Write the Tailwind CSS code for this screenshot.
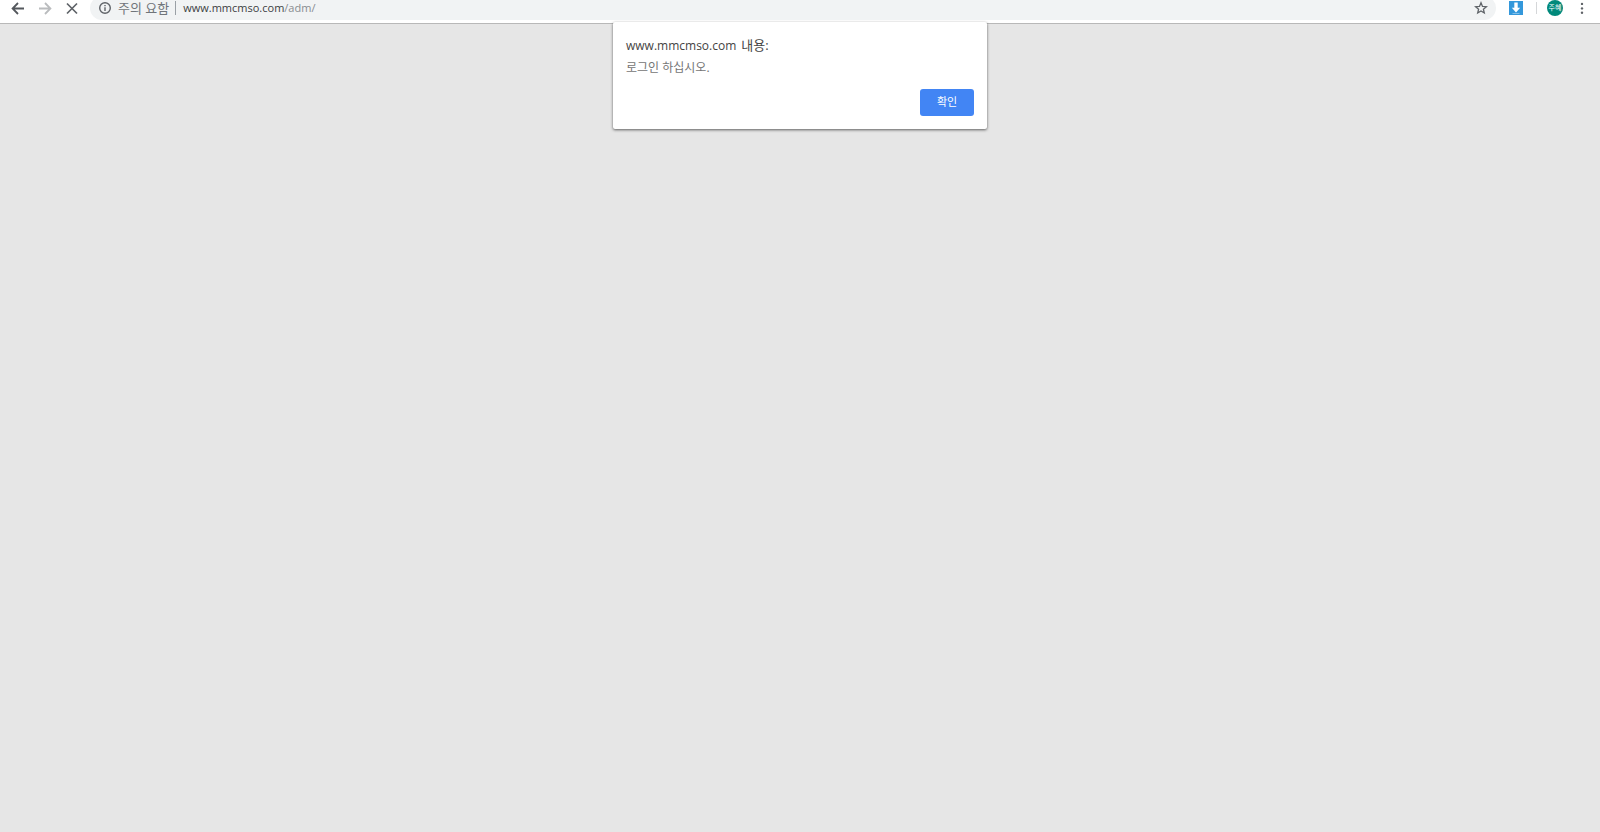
<!doctype html>
<html lang="ko">
<head>
  <meta charset="UTF-8">
  <meta name="viewport" content="width=device-width, initial-scale=1.0">
  <title>www.mmcmso.com</title>
  <script src="https://cdn.jsdelivr.net/npm/@tailwindcss/browser@4"></script>
</head>
<body class="flex h-screen flex-col overflow-hidden bg-[#e6e6e6] font-['Open_Sans','Noto_Sans_CJK_KR',sans-serif]">
  <!-- Toolbar -->
  <header class="h-6 shrink-0 overflow-hidden border-b border-[#b8b8b8] bg-white">
    <div class="-mt-1 flex h-6 items-center text-[#5f6368]">
      <nav class="flex w-[90px] shrink-0 items-center gap-[11px] pl-[10px]">
        <button type="button" aria-label="뒤로">
          <svg class="size-4" viewBox="0 0 16 16" fill="none" stroke="#54585d" stroke-width="1.8"><path d="M14 8.5H3M8 3 2.6 8.5 8 14"/></svg>
        </button>
        <button type="button" aria-label="앞으로">
          <svg class="size-4" viewBox="0 0 16 16" fill="none" stroke="#babcbe" stroke-width="1.8"><path d="M2 8.5h11M8 3l5.4 5.5L8 14"/></svg>
        </button>
        <button type="button" aria-label="중지">
          <svg class="size-4" viewBox="0 0 16 16" fill="none" stroke="#5f6368" stroke-width="1.7"><path d="m3 3.5 10 10M13 3.5l-10 10"/></svg>
        </button>
      </nav>
      <div class="flex h-6 flex-1 items-center rounded-full bg-[#f1f3f4] pr-2 pl-2">
        <svg class="size-[14px]" viewBox="0 0 14 14" fill="none" stroke="#5f6368" stroke-width="1.4"><circle cx="7" cy="7" r="5.3"/><path d="M7 6.3v3.8M7 3.9v1.4"/></svg>
        <span class="ml-[6px] text-[13px] leading-4 text-[#70757a]">주의 요함</span>
        <span class="mr-[7px] ml-[6px] h-[14px] w-px bg-[#9aa0a6]"></span>
        <p class="flex-1 text-[11px] leading-4 text-[#888c90]"><span class="text-[#3c4043]">www.mmcmso.com</span>/adm/</p>
        <button type="button" aria-label="북마크">
          <svg class="size-[14px]" viewBox="0 0 14 14" fill="none" stroke="#5f6368" stroke-width="1.3"><path d="m7 1.8 1.5 3.6 3.9.3-3 2.5.9 3.8L7 10l-3.3 2 .9-3.8-3-2.5 3.9-.3z"/></svg>
        </button>
      </div>
      <div class="flex shrink-0 items-center pr-3 pl-[13px]">
        <button type="button" aria-label="다운로드">
          <svg class="size-[14px]" viewBox="0 0 14 14"><path fill="#3498db" d="M0 0h14v14H0z"/><path fill="#fff" d="M5.3 1.5h3.4v5.2h2.5L7 11.4 2.8 6.7h2.5z"/><path fill="#a5d2f0" d="M3.5 12.2h7v.7h-7z"/></svg>
        </button>
        <span class="mr-[10px] ml-[13px] h-3 w-px bg-[#d5d7d9]"></span>
        <button type="button" class="size-4 rounded-full bg-[#00897b] text-center text-[7px] leading-4 text-white">주혜</button>
        <button type="button" class="ml-[13px]" aria-label="메뉴">
          <svg class="h-3 w-3" viewBox="0 0 12 12" fill="#5f6368"><circle cx="6" cy="1.9" r="1.2"/><circle cx="6" cy="6.4" r="1.2"/><circle cx="6" cy="10.8" r="1.2"/></svg>
        </button>
      </div>
    </div>
  </header>

  <!-- Page with the alert over it -->
  <main class="flex-1">
    <div role="alertdialog" aria-labelledby="title" aria-describedby="message" class="relative mx-auto -mt-0.5 w-[374px] rounded-[2px] bg-white p-[13px] shadow-[0_1px_3px_rgba(0,0,0,0.6)]">
      <h1 id="title" class="flex items-baseline gap-[5px] text-[13px] leading-5 text-[#444]"><span class="text-xs leading-5">www.mmcmso.com</span> 내용:</h1>
      <p id="message" class="mt-1 text-xs leading-4 text-[#757575]">로그인 하십시오.</p>
      <div class="mt-[13px] flex justify-end">
        <button type="button" class="h-[27px] w-[54px] rounded-[3px] bg-[#4285f4] text-[11px] text-white">확인</button>
      </div>
    </div>
  </main>
</body>
</html>
